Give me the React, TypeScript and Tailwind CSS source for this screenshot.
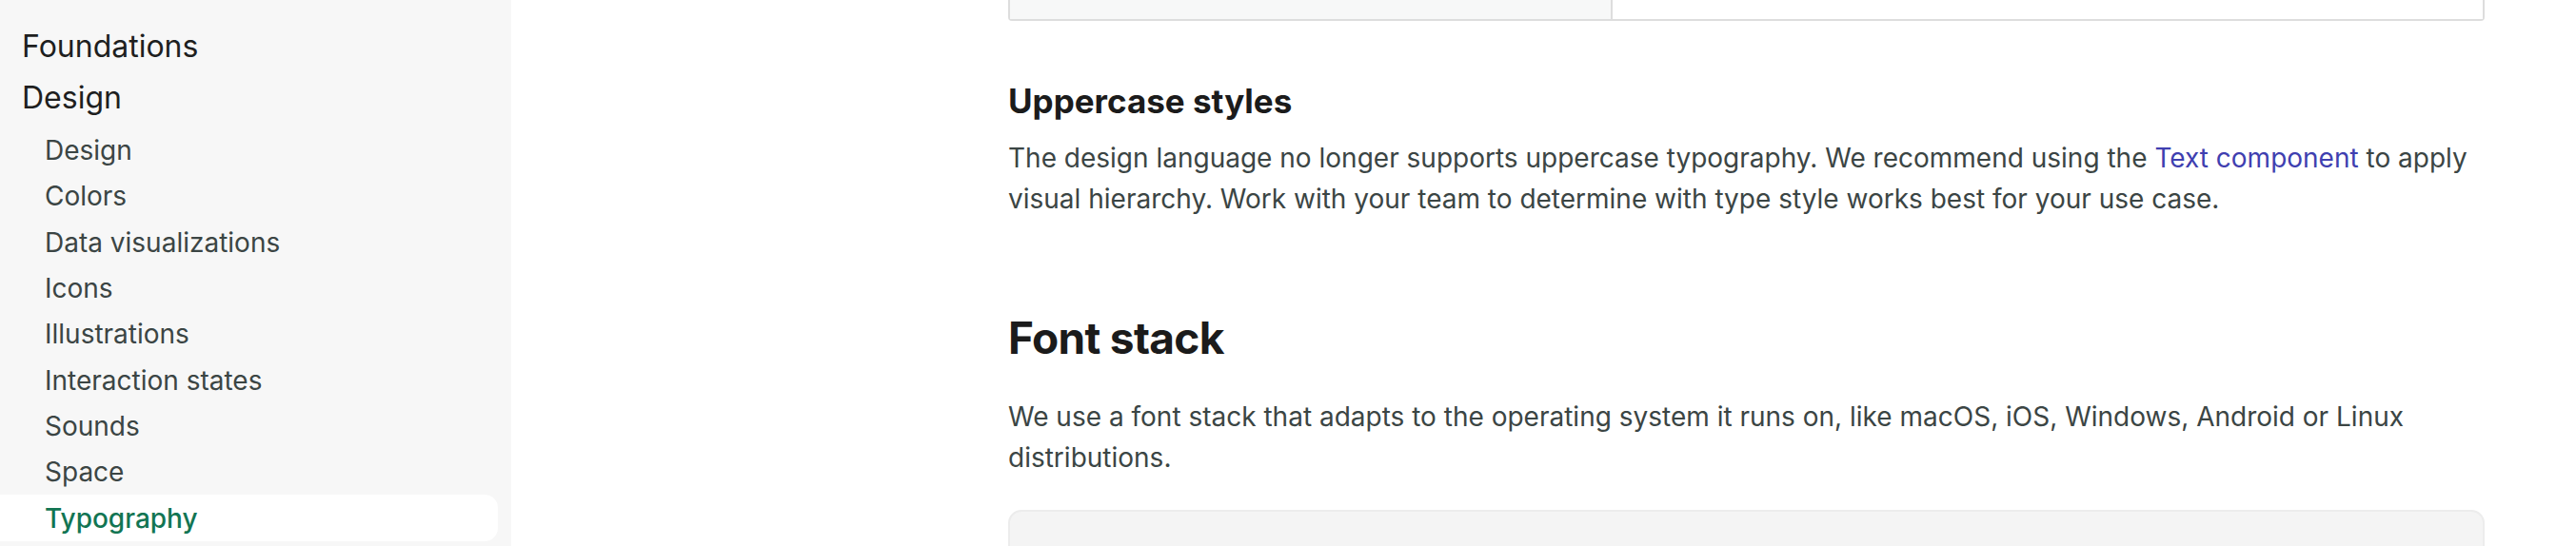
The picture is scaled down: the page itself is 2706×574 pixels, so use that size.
import React from 'react'

const subItems = [
  'Design',
  'Colors',
  'Data visualizations',
  'Icons',
  'Illustrations',
  'Interaction states',
  'Sounds',
  'Space',
  'Typography'
]

const Sidebar = () => (
  <aside className="w-[537px] shrink-0 bg-[#f7f7f7] pt-[22px]">
    <div className="pl-[23px] text-[32px] leading-[54px] text-[#1e1f1f]">Foundations</div>
    <div className="pl-[23px] text-[32px] leading-[54px] text-[#1e1f1f]">Design</div>
    <nav className="mt-[4px] flex flex-col pr-[14px]">
      {subItems.map((item, i) => {
        const active = i === subItems.length - 1 && item === 'Typography'
        return (
          <a
            key={item + i}
            className={
              active
                ? 'flex h-[48.3px] items-center rounded-r-[14px] bg-white pl-[47px] text-[28px] font-medium text-[#127553]'
                : 'flex h-[48.3px] items-center pl-[47px] text-[28px] text-[#3b4544]'
            }
          >
            {item}
          </a>
        )
      })}
    </nav>
  </aside>
)

export default function App() {
  return (
    <div
      className="flex h-[574px] w-[2706px] overflow-hidden bg-white"
      style={{ fontFamily: 'Inter, "Noto Sans", sans-serif' }}
    >
      <Sidebar />

      <main className="flex-1 pl-[522px]">
        <div className="w-[1551px]">
          {/* tail of the table above */}
          <div className="grid h-[22px] grid-cols-[633px_1fr] rounded-b-[4px] border-x-2 border-b-2 border-[#dddddd]">
            <div className="border-r-2 border-[#dddddd] bg-[#f7f8f8]" />
            <div className="bg-white" />
          </div>

          <h3 className="mt-[63px] text-[35px] font-bold leading-[42px] text-[#1b1b1b]">
            Uppercase styles
          </h3>
          <p className="mt-[18px] text-[28px] leading-[43px] text-[#3b4544]">
            The design language no longer supports uppercase typography. We recommend using the{' '}
            <a className="text-[#3f3fb0]">Text component</a> to apply visual hierarchy. Work with
            your team to determine with type style works best for your use case.
          </p>

          <h2 className="mt-[97px] text-[46px] font-bold leading-[54px] tracking-[-0.015em] text-[#1b1b1b]">
            Font stack
          </h2>
          <p className="mt-[35px] text-[28px] leading-[43px] text-[#3b4544]">
            We use a font stack that adapts to the operating system it runs on, like macOS, iOS,
            Windows, Android or Linux distributions.
          </p>

          <div className="mt-[33px] h-[120px] rounded-[14px] border-2 border-[#ececec] bg-[#f4f4f4]" />
        </div>
      </main>
    </div>
  )
}
